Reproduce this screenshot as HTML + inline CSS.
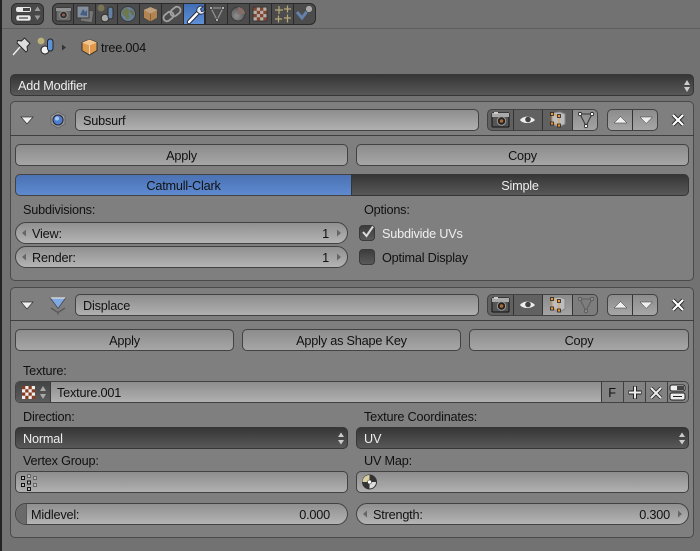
<!DOCTYPE html>
<html><head><meta charset="utf-8">
<style>
html,body{margin:0;padding:0}
body{width:700px;height:551px;overflow:hidden;background:#727272;position:relative;font-family:"Liberation Sans",sans-serif;font-size:12.7px;letter-spacing:-.2px;color:#111}
div,span{position:absolute;box-sizing:border-box;white-space:nowrap}
svg{position:absolute;overflow:visible}
.panel{left:10px;width:684px;background:#7f7f7f;border:1px solid #4a4a4a;border-radius:5px}
.hline{left:10px;width:684px;height:1px;background:#3f3f3f}
.btn{height:22px;border:1px solid #424242;border-radius:5px;background:linear-gradient(#8c8c8c,#a6a6a6);text-align:center;line-height:22px;color:#111}
.fld{height:22px;border:1px solid #424242;border-radius:5px;background:linear-gradient(#8d8d8d,#b0b0b0);line-height:22px;padding-left:7px;color:#111}
.num{height:22px;border:1px solid #424242;border-radius:11px;background:linear-gradient(#909090,#b4b4b4);line-height:22px;color:#111}
.drop{height:22px;border:1px solid #363636;border-radius:5px;background:linear-gradient(#363636,#585858);line-height:22px;padding-left:7px;color:#eee}
.lab{line-height:16px;color:#111}
.sep{width:1px;background:#333}
.tab{top:3px;height:22px;width:1px;background:#2a2a2a}
</style></head>
<body>
<div style="left:0;top:0;width:2px;height:551px;background:#222"></div>
<div style="left:2px;top:28px;width:698px;height:1px;background:#5e5e5e"></div>

<!-- editor type -->
<div style="left:11px;top:3px;width:33px;height:22px;border-radius:6px;border:1px solid #2e2e2e;background:#484848"></div>
<svg style="left:0;top:0" width="60" height="28"><rect x="16" y="7" width="15" height="5" rx="2" fill="#e8e8e8"/><rect x="23" y="8" width="7" height="3" fill="#444"/><rect x="16" y="15" width="15" height="6" rx="2" fill="#e8e8e8" stroke="#222" stroke-width=".5"/><path d="M19 18h9" stroke="#222"/><path d="M34.500 11l3-4.500 3 4.500zM34.500 15.500l3 4.500 3-4.500z" fill="#999"/></svg>

<!-- tabs -->
<div style="left:52px;top:3px;width:264px;height:22px;border-radius:6px;border:1px solid #2a2a2a;background:#4c4c4c"></div>
<div style="left:183px;top:3px;width:22px;height:22px;background:linear-gradient(#3f6eb5,#5f8fd6);border:1px solid #2a2a2a"></div>
<div class="tab" style="left:73px"></div><div class="tab" style="left:95px"></div><div class="tab" style="left:117px"></div><div class="tab" style="left:139px"></div><div class="tab" style="left:161px"></div><div class="tab" style="left:183px"></div><div class="tab" style="left:205px"></div><div class="tab" style="left:227px"></div><div class="tab" style="left:249px"></div><div class="tab" style="left:271px"></div><div class="tab" style="left:293px"></div>
<svg style="left:0;top:0" width="330" height="28">
 <g opacity=".72">
 <!-- camera -->
 <rect x="56" y="8" width="15" height="13" rx="1" fill="#777" stroke="#222"/><rect x="56" y="8" width="15" height="3" fill="#aaa"/><circle cx="63.500" cy="15" r="3.800" fill="#222" stroke="#aaa"/><circle cx="63.500" cy="15" r="1.500" fill="#a65"/>
 <!-- render layers -->
 <rect x="81" y="10" width="12" height="12" fill="#888" stroke="#444" transform="rotate(8 87 16)"/><rect x="77" y="6" width="12" height="12" fill="#9ab" stroke="#333"/><path d="M80 15l3-6 2 3 2-2v6z" fill="#469"/>
 <!-- scene -->
 <circle cx="101" cy="8" r="3.500" fill="#b5a764" opacity=".6"/><circle cx="105" cy="18" r="3.800" fill="#ccc" stroke="#222"/><rect x="108" y="7" width="5" height="12" rx="2.500" fill="#6d94c8" stroke="#222"/>
 <!-- world -->
 <circle cx="128" cy="14" r="7.500" fill="#7295b5" stroke="#333"/><path d="M123 10l4-2 3 3-2 3 2 3-3 3-2-4-3-2z" fill="#7a8a50"/><path d="M131 9l3 3v4l-2-1-2-3z" fill="#6f8050"/>
 <!-- object -->
 <path d="M150.500 7l7 3v8l-7 4-7-4v-8z" fill="#d99a55" stroke="#444"/><path d="M143.500 10l7 3.500 7-3.500-7-3z" fill="#ecc090"/><path d="M150.500 13.500v8" stroke="#9a6a38"/>
 <!-- constraints link -->
 <g fill="none" stroke="#c4c4c4" stroke-width="1.800"><rect x="163" y="13" width="11" height="7" rx="3.500" transform="rotate(-40 168.500 16.500)"/><rect x="170" y="8" width="11" height="7" rx="3.500" transform="rotate(-40 175.500 11.500)"/></g>
 </g>
 <!-- wrench -->
 <path d="M189 22l10-10.500" stroke="#223" stroke-width="4.500" stroke-linecap="round"/><path d="M189 22l10-10.500" stroke="#fff" stroke-width="2.500" stroke-linecap="round"/><path d="M197 12c-1-4 2-7 6-5.500l-2.500 2.500 1 2.500 2.500-.5 1-2.500c1 4-3 7-6 5z" fill="#dde8f5" stroke="#223" stroke-width=".8"/>
 <g opacity=".72">
 <!-- data triangle -->
 <path d="M211 8h12l-6 12z" fill="none" stroke="#aaa" stroke-width="1.300"/><circle cx="211" cy="8" r="1.500" fill="#ddd" stroke="#222" stroke-width=".6"/><circle cx="223" cy="8" r="1.500" fill="#ddd" stroke="#222" stroke-width=".6"/><circle cx="217" cy="20" r="1.500" fill="#ddd" stroke="#222" stroke-width=".6"/>
 <!-- material -->
 <defs><radialGradient id="m" cx=".4" cy=".65" r=".7"><stop offset="0" stop-color="#aaa"/><stop offset="1" stop-color="#555"/></radialGradient></defs>
 <circle cx="238" cy="14" r="7" fill="url(#m)" stroke="#333"/><path d="M238 7a7 7 0 0 1 7 7l-7 0z" fill="#9a7a70"/>
 <!-- texture -->
 <rect x="253" y="7" width="14" height="14" fill="#ddd5cc" stroke="#333"/><g fill="#9a4428"><rect x="253.500" y="7.500" width="3.300" height="3.300"/><rect x="260" y="7.500" width="3.300" height="3.300"/><rect x="256.800" y="10.800" width="3.300" height="3.300"/><rect x="263.300" y="10.800" width="3.300" height="3.300"/><rect x="253.500" y="14" width="3.300" height="3.300"/><rect x="260" y="14" width="3.300" height="3.300"/><rect x="256.800" y="17.300" width="3.300" height="3.300"/><rect x="263.300" y="17.300" width="3.300" height="3.300"/></g>
 <!-- particles -->
 <g stroke="#e0cc88" stroke-width="1.200"><path d="M275 10h8M279 6v8M284 9h7M287.500 5.500v7M275 19h7M278.500 15.500v7M284 18h7M287.500 14.500v8"/></g>
 <!-- physics -->
 <path d="M297 12l5 6 6-8" fill="none" stroke="#6c96d0" stroke-width="3"/><circle cx="309" cy="9" r="3.500" fill="#ccc" stroke="#333" stroke-width=".6"/>
 </g>
</svg>

<!-- breadcrumb -->
<svg style="left:0;top:0" width="110" height="60">
 <path d="M13 55L20 47" stroke="#eee" stroke-width="1.400"/>
 <path d="M17 43l9 9 1.500-1.500-.5-4 3-3-5.500-5.500-3 3-4-.5z" fill="#ddd" stroke="#222" stroke-width=".9"/>
 <circle cx="41" cy="41" r="3.400" fill="#cfc07a" opacity=".8"/><circle cx="45" cy="50" r="4" fill="#f2f2f2" stroke="#222"/><rect x="47.500" y="39" width="5.500" height="12" rx="2.700" fill="#5f93d8" stroke="#222"/>
 <path d="M62 44.500l4 3-4 3z" fill="#333"/>
 <path d="M89.500 39.500l7.500 3v8l-7.500 4.500-7.500-4.500v-8z" fill="#e09a4c" stroke="#333"/><path d="M82 42.500l7.500 3 7.500-3-7.500-3z" fill="#f2c68e"/><path d="M89.500 45.500v9" stroke="#fff" stroke-opacity=".6"/>
</svg>
<span style="left:101px;top:40px;line-height:16px">tree.004</span>

<!-- add modifier -->
<div class="drop" style="left:10px;top:74px;width:684px;">Add Modifier</div>
<svg style="left:0;top:0" width="700" height="100"><path d="M684 85l3-5 3 5zM684 87l3 5 3-5z" fill="#ccc"/></svg>

<!-- PANEL 1 -->
<div class="panel" style="top:101px;height:180px"></div>
<div class="hline" style="top:135px"></div>
<svg style="left:0;top:0" width="70" height="140">
 <path d="M21 117h12l-6 7z" fill="#eee" stroke="#333" stroke-width=".7"/>
 <path d="M58 112l7 4v8l-7 4-7-4v-8z" fill="#999" stroke="#666"/><circle cx="58" cy="120" r="5" fill="#4f80d0" stroke="#223"/><circle cx="57" cy="118.500" r="2" fill="#a9c6ee"/>
</svg>
<div class="fld" style="left:75px;top:109px;width:404px;">Subsurf</div>

<!-- header buttons p1 -->
<div style="left:487px;top:109px;width:111px;height:22px;border:1px solid #424242;border-radius:5px;overflow:hidden;background:#616161">
 <div style="left:84px;top:0;width:26px;height:20px;background:linear-gradient(#8b8b8b,#a4a4a4)"></div>
 <div class="sep" style="left:25px;top:0;height:20px"></div><div class="sep" style="left:54px;top:0;height:20px"></div><div class="sep" style="left:84px;top:0;height:20px"></div>
</div>
<div class="btn" style="left:607px;top:109px;width:51px"><div class="sep" style="left:24px;top:0;height:20px"></div></div>
<svg style="left:0;top:0" width="700" height="140">
 <defs>
 <g id="cam"><rect x="492" y="113" width="17" height="14" rx="1" fill="#555" stroke="#111"/><rect x="492" y="113" width="17" height="4" fill="#aaa"/><rect x="494" y="112" width="4" height="2" fill="#ccc"/><circle cx="501.500" cy="121" r="4.200" fill="#222" stroke="#999"/><circle cx="501.500" cy="121" r="1.800" fill="#b06a30"/></g>
 <g id="eye"><path d="M520 120c3-4.500 11-4.500 15 0-4 4-12 4-15 0z" fill="#eee"/><circle cx="528" cy="119.500" r="2.800" fill="#444"/></g>
 <g id="edit"><path d="M552 113l8-1 5 2v10l-6 3-7-3z" fill="#bdbdbd" stroke="#888"/><path d="M552 114v9M552 114l7 2M552 123l7 2M559 116v9" stroke="#e8973a" stroke-width=".8" fill="none"/><g fill="#e8973a" stroke="#222" stroke-width=".8"><rect x="550.500" y="112.500" width="3" height="3"/><rect x="557.500" y="114.500" width="3" height="3"/><rect x="550.500" y="122" width="3" height="3"/><rect x="557.500" y="124" width="3" height="3"/></g></g>
 <g id="upd"><path d="M614 123l6.500-6.500 6.500 6.500z" fill="#eee" stroke="#333" stroke-width=".5"/><path d="M640 117h12.500l-6.250 6.500z" fill="#eee" stroke="#333" stroke-width=".5"/><path d="M673 115l10 10M683 115l-10 10" stroke="#222" stroke-width="4"/><path d="M673 115l10 10M683 115l-10 10" stroke="#fff" stroke-width="2.200"/></g>
 </defs>
 <use href="#cam"/><use href="#eye"/><use href="#edit"/><use href="#upd"/>
 <g fill="none" stroke="#333" stroke-width="1"><path d="M580 114h12l-6 12z"/></g><g fill="#fff" stroke="#111" stroke-width=".8"><circle cx="580" cy="114" r="1.700"/><circle cx="592" cy="114" r="1.700"/><circle cx="586" cy="126" r="1.700"/></g>
</svg>

<div class="btn" style="left:15px;top:144px;width:333px">Apply</div>
<div class="btn" style="left:356px;top:144px;width:333px">Copy</div>
<div class="btn" style="left:15px;top:174px;width:337px;background:linear-gradient(#4a72b4,#5e8ad0);border-radius:5px 0 0 5px">Catmull-Clark</div>
<div class="drop" style="left:351px;top:174px;width:338px;border-radius:0 5px 5px 0;padding:0;text-align:center;">Simple</div>

<span class="lab" style="left:23px;top:202px">Subdivisions:</span>
<span class="lab" style="left:364px;top:202px">Options:</span>

<div class="num" style="left:15px;top:222px;width:333px"><span style="left:16px;top:0">View:</span><span style="right:18px;top:0">1</span></div>
<div class="num" style="left:15px;top:246px;width:333px"><span style="left:16px;top:0">Render:</span><span style="right:18px;top:0">1</span></div>
<svg style="left:0;top:0" width="360" height="270"><g fill="#666"><path d="M26 229.500v7l-4-3.500zM26 253.500v7l-4-3.500zM337 229.500v7l4-3.500zM337 253.500v7l4-3.500z"/></g></svg>

<div style="left:359px;top:225px;width:16px;height:16px;border:1px solid #3a3a3a;border-radius:4px;background:linear-gradient(#3c3c3c,#5a5a5a)"></div>
<div style="left:359px;top:249px;width:16px;height:16px;border:1px solid #3a3a3a;border-radius:4px;background:linear-gradient(#3c3c3c,#5a5a5a)"></div>
<svg style="left:0;top:0" width="400" height="270"><path d="M363 232l3.500 4 6.500-9.500" fill="none" stroke="#dcdcdc" stroke-width="2"/></svg>
<span style="left:382px;top:226px;line-height:16px;color:#f0f0f0">Subdivide UVs</span>
<span style="left:382px;top:250px;line-height:16px">Optimal Display</span>

<!-- PANEL 2 -->
<div class="panel" style="top:287px;height:251px"></div>
<div class="hline" style="top:320px"></div>
<div class="fld" style="left:75px;top:294px;width:404px;">Displace</div>
<div style="left:487px;top:294px;width:111px;height:22px;border:1px solid #424242;border-radius:5px;overflow:hidden;background:#616161">
 <div style="left:54px;top:0;width:30px;height:20px;background:linear-gradient(#8b8b8b,#a4a4a4)"></div>
 <div style="left:84px;top:0;width:26px;height:20px;background:#7d7d7d"></div>
 <div class="sep" style="left:25px;top:0;height:20px"></div><div class="sep" style="left:54px;top:0;height:20px"></div><div class="sep" style="left:84px;top:0;height:20px"></div>
</div>
<div class="btn" style="left:607px;top:294px;width:51px"><div class="sep" style="left:24px;top:0;height:20px"></div></div>
<svg style="left:0;top:0" width="700" height="330">
 <path d="M21 302h12l-6 7z" fill="#eee" stroke="#333" stroke-width=".7"/>
 <path d="M51 298l7 10 7-10z" fill="#7fa9e2"/><path d="M50 298h16" stroke="#ddd" stroke-width="1.300"/><path d="M50 297.500l8 11 8-11" fill="none" stroke="#445" stroke-width=".7"/><path d="M51 308l7 4.500 7-4.500" fill="none" stroke="#5a5a5a" stroke-width="1.500"/><path d="M58 312v3" stroke="#5a5a5a"/>
 <use href="#cam" y="185"/><use href="#eye" y="185"/><use href="#edit" y="185"/><use href="#upd" y="185"/>
 <g fill="none" stroke="#5e5e5e" stroke-width="1"><path d="M580 299h12l-6 12z"/></g><g fill="#8c8c8c" stroke="#555" stroke-width=".8"><circle cx="580" cy="299" r="1.700"/><circle cx="592" cy="299" r="1.700"/><circle cx="586" cy="311" r="1.700"/></g>
</svg>

<div class="btn" style="left:15px;top:329px;width:219px">Apply</div>
<div class="btn" style="left:242px;top:329px;width:219px">Apply as Shape Key</div>
<div class="btn" style="left:469px;top:329px;width:220px">Copy</div>

<span class="lab" style="left:23px;top:363px">Texture:</span>
<div class="fld" style="left:15px;top:381px;width:674px;padding-left:41px;overflow:hidden">Texture.001
 <div style="left:0;top:0;width:35px;height:20px;background:linear-gradient(#444,#5c5c5c);border-right:1px solid #3a3a3a"></div>
 <div style="left:585px;top:0;width:88px;height:20px;background:#828282;border-left:1px solid #3a3a3a"></div>
 <span style="left:585px;top:0;width:22px;text-align:center">F</span>
 <div class="sep" style="left:607px;top:0;height:20px;background:#3f3f3f"></div><div class="sep" style="left:629px;top:0;height:20px;background:#3f3f3f"></div><div class="sep" style="left:651px;top:0;height:20px;background:#3f3f3f"></div>
</div>
<svg style="left:0;top:0" width="700" height="410">
 <rect x="22" y="386" width="13" height="13" fill="#eee"/><g fill="#8a3a20"><rect x="22" y="386" width="3.250" height="3.250"/><rect x="28.500" y="386" width="3.250" height="3.250"/><rect x="25.250" y="389.250" width="3.250" height="3.250"/><rect x="31.750" y="389.250" width="3.250" height="3.250"/><rect x="22" y="392.500" width="3.250" height="3.250"/><rect x="28.500" y="392.500" width="3.250" height="3.250"/><rect x="25.250" y="395.750" width="3.250" height="3.250"/><rect x="31.750" y="395.750" width="3.250" height="3.250"/></g>
 <path d="M40 391l3-5 3 5zM40 394l3 5 3-5z" fill="#aaa"/>
 <path d="M635 386v13M628.500 392.500h13" stroke="#222" stroke-width="4"/><path d="M635 386.500v12M629 392.500h12" stroke="#eee" stroke-width="2"/>
 <path d="M651 388l10 10M661 388l-10 10" stroke="#222" stroke-width="3.600"/><path d="M651 388l10 10M661 388l-10 10" stroke="#eee" stroke-width="2"/>
 <rect x="670" y="385" width="15" height="6" rx="2" fill="#eee" stroke="#222"/><rect x="677" y="386" width="7" height="4" fill="#444"/><rect x="670" y="393" width="15" height="7" rx="2" fill="#eee" stroke="#222"/><path d="M673 396.500h9" stroke="#222"/>
</svg>

<span class="lab" style="left:23px;top:409px">Direction:</span>
<span class="lab" style="left:364px;top:409px">Texture Coordinates:</span>
<div class="drop" style="left:15px;top:427px;width:333px">Normal</div>
<div class="drop" style="left:356px;top:427px;width:333px">UV</div>
<svg style="left:0;top:0" width="700" height="460"><path d="M338 437l3-4.500 3 4.500zM338 440l3 4.500 3-4.500zM679 437l3-4.500 3 4.500zM679 440l3 4.500 3-4.500z" fill="#ccc"/></svg>

<span class="lab" style="left:23px;top:453px">Vertex Group:</span>
<span class="lab" style="left:364px;top:453px">UV Map:</span>
<div class="fld" style="left:15px;top:471px;width:333px"></div>
<div class="fld" style="left:356px;top:471px;width:333px"></div>
<svg style="left:0;top:0" width="400" height="500">
 <g fill="#bbb" stroke="#111" stroke-width="1"><rect x="21.500" y="476.500" width="3" height="3"/><rect x="27.500" y="474.500" width="3" height="3" stroke="#666"/><rect x="27.500" y="481" width="3" height="3"/><rect x="33.500" y="476.500" width="3" height="3" stroke="#666"/><rect x="21.500" y="483.500" width="3" height="3"/><rect x="27.500" y="487.500" width="3" height="3"/><rect x="33.500" y="483.500" width="3" height="3" stroke="#666"/></g>
 <circle cx="369.500" cy="482" r="7" fill="#ddd" stroke="#333"/><path d="M369.500 482h-7a7 7 0 0 0 7 7zM369.500 482h7a7 7 0 0 0-7-7z" fill="#333"/><path d="M369.500 475a7 7 0 0 0-7 7h7z" fill="#d8d0a0"/><circle cx="369.500" cy="482" r="2" fill="#fff" stroke="#333" stroke-width=".6"/>
</svg>

<div class="num" style="left:15px;top:503px;width:333px;overflow:hidden;padding:0">
 <div style="left:0;top:0;width:11px;height:20px;background:#6a6a6a;border-right:1px solid #5a5a5a"></div>
 <span style="left:15px;top:0">Midlevel:</span><span style="right:17px;top:0">0.000</span>
</div>
<div class="num" style="left:356px;top:503px;width:333px"><span style="left:16px;top:0">Strength:</span><span style="right:18px;top:0">0.300</span></div>
<svg style="left:0;top:0" width="700" height="530"><g fill="#666"><path d="M367 510.500v7l-4-3.500zM678 510.500v7l4-3.500z"/></g></svg>
</body></html>
